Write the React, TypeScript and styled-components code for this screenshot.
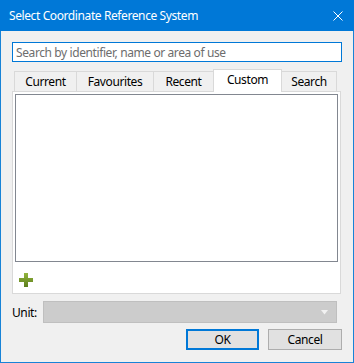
import styled, { createGlobalStyle } from "styled-components";

const GlobalStyle = createGlobalStyle`
  html, body {
    margin: 0;
    padding: 0;
    background: #ffffff;
  }
  * {
    box-sizing: border-box;
  }
`;

const Window = styled.div`
  width: 354px;
  height: 363px;
  display: flex;
  flex-direction: column;
  background: #f0f0f0;
  border: 1px solid #1883d7;
  border-top: none;
  font-family: "Noto Sans", "Open Sans", sans-serif;
  font-size: 12px;
  letter-spacing: -0.4px;
  color: #000000;
`;

const TitleBar = styled.div`
  height: 31px;
  margin: 0 -1px;
  padding: 0 11px 0 9px;
  display: flex;
  align-items: center;
  justify-content: space-between;
  background: #0078d7;
  color: #ffffff;
  font-size: 12px;
`;

const Body = styled.div`
  flex: 1;
  display: flex;
  flex-direction: column;
  padding: 11px 11px 12px;
`;

const SearchInput = styled.input`
  height: 20px;
  width: 100%;
  padding: 0 3px;
  border: 1px solid #0078d7;
  background: #ffffff;
  font-family: inherit;
  font-size: 12px;
  letter-spacing: inherit;
  outline: none;

  &::placeholder {
    color: #6d6d6d;
  }
`;

const TabWidget = styled.div`
  margin-top: 7px;
  margin-right: 1px;
  display: flex;
  flex-direction: column;
`;

const TabBar = styled.div`
  height: 22px;
  padding-left: 3px;
  display: flex;
  align-items: flex-end;
`;

const Tab = styled.div<{ $active?: boolean; $width: number }>`
  position: relative;
  width: ${(p) => p.$width}px;
  height: ${(p) => (p.$active ? 23 : 20)}px;
  margin-left: -1px;
  margin-bottom: ${(p) => (p.$active ? -1 : 0)}px;
  z-index: ${(p) => (p.$active ? 1 : 0)};
  display: flex;
  align-items: center;
  justify-content: center;
  padding-bottom: ${(p) => (p.$active ? 3 : 0)}px;
  background: ${(p) => (p.$active ? "#ffffff" : "#f0f0f0")};
  border: 1px solid #d9d9d9;
  border-bottom: none;
`;

const Pane = styled.div`
  height: 203px;
  padding: 2px;
  display: flex;
  flex-direction: column;
  background: #ffffff;
  border: 1px solid #d9d9d9;
`;

const ListBox = styled.div`
  height: 168px;
  background: #ffffff;
  border: 1px solid #828790;
`;

const AddButton = styled.div`
  width: 14px;
  height: 14px;
  margin: 11px 0 0 4px;
`;

const UnitRow = styled.div`
  margin-top: 7px;
  display: flex;
  align-items: center;
`;

const UnitLabel = styled.span`
  width: 31px;
`;

const Combo = styled.div`
  flex: 1;
  height: 22px;
  margin-right: 5px;
  padding-right: 8px;
  display: flex;
  align-items: center;
  justify-content: flex-end;
  background: #cccccc;
  border: 1px solid #bfbfbf;
`;

const ButtonRow = styled.div`
  margin-top: 6px;
  display: flex;
  justify-content: flex-end;
  gap: 9px;
`;

const Button = styled.button<{ $default?: boolean }>`
  width: ${(p) => (p.$default ? 73 : 74)}px;
  height: 21px;
  padding: 0;
  background: #e1e1e1;
  border: ${(p) => (p.$default ? "2px solid #0078d7" : "1px solid #adadad")};
  font-family: inherit;
  font-size: 12px;
  letter-spacing: inherit;
  color: #000000;
`;

const tabs = [
  { label: "Current", width: 63 },
  { label: "Favourites", width: 78 },
  { label: "Recent", width: 61 },
  { label: "Custom", width: 69, active: true },
  { label: "Search", width: 56 },
];

const App = () => {
  return (
    <>
      <GlobalStyle />
      <Window>
        <TitleBar>
          <span>Select Coordinate Reference System</span>
          <svg width="10" height="10" viewBox="0 0 10 10">
            <path d="M0.5 0.5 L9.5 9.5 M9.5 0.5 L0.5 9.5" stroke="#ffffff" strokeWidth="1" />
          </svg>
        </TitleBar>
        <Body>
          <SearchInput placeholder="Search by identifier, name or area of use" />
          <TabWidget>
            <TabBar>
              {tabs.map((t) => (
                <Tab key={t.label} $width={t.width} $active={t.active}>
                  {t.label}
                </Tab>
              ))}
            </TabBar>
            <Pane>
              <ListBox />
              <AddButton>
                <svg width="14" height="14" viewBox="0 0 14 14">
                  <defs>
                    <linearGradient id="plusFill" x1="0" y1="0" x2="0" y2="1">
                      <stop offset="0" stopColor="#93b53e" />
                      <stop offset="1" stopColor="#5c7d1c" />
                    </linearGradient>
                  </defs>
                  <path d="M5 0 H9 V5 H14 V9 H9 V14 H5 V9 H0 V5 H5 Z" fill="url(#plusFill)" />
                </svg>
              </AddButton>
            </Pane>
          </TabWidget>
          <UnitRow>
            <UnitLabel>Unit:</UnitLabel>
            <Combo>
              <svg width="7" height="5" viewBox="0 0 7 5">
                <path d="M0 0 H7 L3.5 4.5 Z" fill="#f2f2f2" />
              </svg>
            </Combo>
          </UnitRow>
          <ButtonRow>
            <Button $default>OK</Button>
            <Button>Cancel</Button>
          </ButtonRow>
        </Body>
      </Window>
    </>
  );
};

export default App;
